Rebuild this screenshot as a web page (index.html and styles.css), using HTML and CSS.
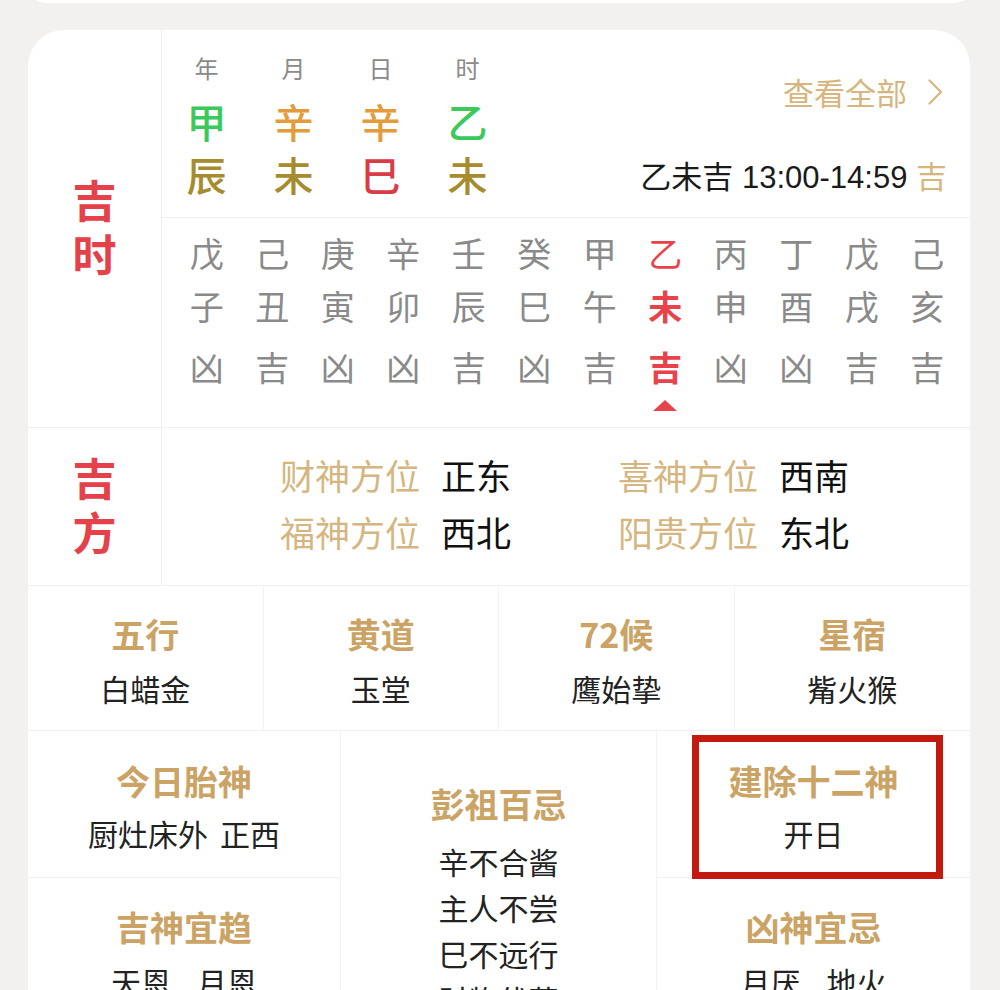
FILE: index.html
```html
<!DOCTYPE html>
<html lang="zh">
<head>
<meta charset="utf-8">
<link rel="stylesheet" href="styles.css">
</head>
<body>
<div class="topcard"></div>
<div class="card">
  <section class="sec-time">
    <div class="side"><span>吉</span><span>时</span></div>
    <div class="main">
      <div class="head">
        <div class="pillars">
          <div class="pillar"><span class="pl">年</span><span class="ps green">甲</span><span class="ps olive">辰</span></div>
          <div class="pillar"><span class="pl">月</span><span class="ps orange">辛</span><span class="ps olive">未</span></div>
          <div class="pillar"><span class="pl">日</span><span class="ps orange">辛</span><span class="ps red">巳</span></div>
          <div class="pillar"><span class="pl">时</span><span class="ps green">乙</span><span class="ps olive">未</span></div>
        </div>
        <div class="info">
          <div class="more">查看全部<svg class="chev" viewBox="0 0 16 28" width="16" height="28"><path d="M2.5 2.5 L14 14 L2.5 25.5" fill="none" stroke="#d6b67e" stroke-width="2.2" stroke-linecap="round" stroke-linejoin="round"/></svg></div>
          <div class="now">乙未吉 13:00-14:59 <span class="tan">吉</span></div>
        </div>
      </div>
      <div class="hours">
        <div class="hour"><span>戊</span><span>子</span><span>凶</span></div>
        <div class="hour"><span>己</span><span>丑</span><span>吉</span></div>
        <div class="hour"><span>庚</span><span>寅</span><span>凶</span></div>
        <div class="hour"><span>辛</span><span>卯</span><span>凶</span></div>
        <div class="hour"><span>壬</span><span>辰</span><span>吉</span></div>
        <div class="hour"><span>癸</span><span>巳</span><span>凶</span></div>
        <div class="hour"><span>甲</span><span>午</span><span>吉</span></div>
        <div class="hour cur"><span>乙</span><span>未</span><span>吉</span><i class="tri"></i></div>
        <div class="hour"><span>丙</span><span>申</span><span>凶</span></div>
        <div class="hour"><span>丁</span><span>酉</span><span>凶</span></div>
        <div class="hour"><span>戊</span><span>戌</span><span>吉</span></div>
        <div class="hour"><span>己</span><span>亥</span><span>吉</span></div>
      </div>
    </div>
  </section>
  <section class="sec-dir">
    <div class="side"><span>吉</span><span>方</span></div>
    <div class="dirs">
      <div class="dir"><span class="k">财神方位</span><span class="v">正东</span></div>
      <div class="dir"><span class="k">喜神方位</span><span class="v">西南</span></div>
      <div class="dir"><span class="k">福神方位</span><span class="v">西北</span></div>
      <div class="dir"><span class="k">阳贵方位</span><span class="v">东北</span></div>
    </div>
  </section>
  <section class="quad">
    <div class="qcell"><div class="t">五行</div><div class="d">白蜡金</div></div>
    <div class="qcell"><div class="t">黄道</div><div class="d">玉堂</div></div>
    <div class="qcell"><div class="t">72候</div><div class="d">鹰始挚</div></div>
    <div class="qcell"><div class="t">星宿</div><div class="d">觜火猴</div></div>
  </section>
  <section class="bottom">
    <div class="col">
      <div class="bcell first"><div class="t">今日胎神</div><div class="d">厨灶床外<span class="sp"></span>正西</div></div>
      <div class="bcell second"><div class="t">吉神宜趋</div><div class="d">天恩<span class="gap"></span>月恩</div></div>
    </div>
    <div class="col mid">
      <div class="t">彭祖百忌</div>
      <div class="lines">
        <div>辛不合酱</div>
        <div>主人不尝</div>
        <div>巳不远行</div>
        <div>财物伏藏</div>
      </div>
    </div>
    <div class="col">
      <div class="bcell first marked"><div class="t">建除十二神</div><div class="d">开日</div><div class="mark"></div></div>
      <div class="bcell second"><div class="t">凶神宜忌</div><div class="d">月厌<span class="gap"></span>地火</div></div>
    </div>
  </section>
</div>
</body>
</html>
```
FILE: styles.css
```css
html, body {
  margin: 0;
  padding: 0;
}
body {
  background: #f2f1ef;
  font-family: "Noto Sans CJK SC", "Noto Sans", sans-serif;
  height: 990px;
  overflow: hidden;
}
.topcard {
  margin: -40px 25px 0 25px;
  height: 43px;
  background: #fff;
  border-radius: 36px;
}
.card {
  margin: 27px 30px 0 28px;
  background: #fff;
  border-radius: 36px 36px 0 0;
}
.sec-time {
  display: flex;
  height: 397px;
  border-bottom: 1px solid #f0f0f0;
}
.side {
  width: 134px;
  flex: none;
  box-sizing: border-box;
  padding-bottom: 6px;
  border-right: 1px solid #f0f0f0;
  display: flex;
  flex-direction: column;
  justify-content: center;
  align-items: center;
  color: #e5414b;
  font-size: 44px;
  font-weight: 700;
  line-height: 54px;
}
.main {
  flex: 1;
}
.head {
  display: flex;
  justify-content: space-between;
  height: 187px;
  border-bottom: 1px solid #f0f0f0;
}
.pillars {
  display: flex;
  padding-top: 22px;
  padding-left: 1px;
}
.pillar {
  width: 87px;
  display: flex;
  flex-direction: column;
  align-items: center;
}
.pl {
  font-size: 24px;
  line-height: 32px;
  color: #8a8a8a;
}
.ps {
  font-size: 40px;
  line-height: 53px;
  font-weight: 500;
}
.pl + .ps {
  margin-top: 11px;
}
.green { color: #3cc95c; }
.orange { color: #e29c3c; }
.olive { color: #a68c2e; }
.red { color: #d83c46; }
.info {
  padding: 42px 27px 0 0;
  display: flex;
  flex-direction: column;
  align-items: flex-end;
}
.more {
  display: flex;
  align-items: center;
  gap: 20px;
  font-size: 31px;
  line-height: 40px;
  color: #d6b67e;
}
.chev {
  display: block;
}
.now {
  margin-top: 46px;
  margin-right: -4px;
  font-family: "Liberation Sans", "Noto Sans CJK SC", sans-serif;
  font-size: 31px;
  line-height: 40px;
  color: #1a1a1a;
}
.tan {
  color: #d6b67e;
}
.hours {
  display: flex;
  padding-left: 12px;
}
.hour {
  width: 65.5px;
  display: flex;
  flex-direction: column;
  align-items: center;
  padding-top: 9px;
  color: #8a8a8a;
  font-size: 34px;
}
.hour span:nth-child(1) { line-height: 52px; }
.hour span:nth-child(2) { line-height: 54px; }
.hour span:nth-child(3) { line-height: 54px; margin-top: 7px; }
.hour.cur {
  color: #e8434a;
  font-weight: 700;
}
.hour.cur span:nth-child(1) { font-weight: 400; }
.tri {
  display: block;
  width: 0;
  height: 0;
  margin-top: 6px;
  border-left: 12px solid transparent;
  border-right: 12px solid transparent;
  border-bottom: 11px solid #e8434a;
}
.sec-dir {
  display: flex;
  height: 157px;
  border-bottom: 1px solid #f0f0f0;
}
.dirs {
  display: grid;
  grid-template-columns: 338px auto;
  align-content: center;
  padding-left: 118px;
  padding-bottom: 7px;
  font-size: 35px;
  line-height: 57px;
}
.k { color: #d5b680; }
.v { color: #111; margin-left: 21px; }
.quad {
  display: grid;
  grid-template-columns: repeat(4, 1fr);
  height: 144px;
  border-bottom: 1px solid #f0f0f0;
}
.qcell {
  text-align: center;
  padding-top: 23px;
  border-right: 1px solid #f3f3f3;
}
.qcell:last-child { border-right: none; }
.t {
  font-size: 34px;
  font-weight: 700;
  color: #cba365;
  line-height: 50px;
}
.d {
  font-size: 30px;
  color: #222;
  line-height: 50px;
  margin-top: 4px;
}
.sp {
  display: inline-block;
  width: 12px;
}
.gap {
  display: inline-block;
  width: 26px;
}
.bottom {
  display: grid;
  grid-template-columns: 312px 317px 313px;
}
.col {
  text-align: center;
}
.bcell.first {
  height: 147px;
  box-sizing: border-box;
  padding-top: 25px;
  border-bottom: 1px solid #f0f0f0;
}
.bcell.first .d { margin-top: 2px; }
.bcell.second {
  padding-top: 24px;
}
.mid {
  padding-top: 48px;
  border-left: 1px solid #f3f3f3;
  border-right: 1px solid #f3f3f3;
}
.lines {
  margin-top: 9px;
  font-size: 30px;
  line-height: 46px;
  color: #222;
}
.marked {
  position: relative;
}
.mark {
  position: absolute;
  left: 35px;
  top: 4px;
  width: 251px;
  height: 144px;
  box-sizing: border-box;
  border: 7px solid #c3190f;
}
```
